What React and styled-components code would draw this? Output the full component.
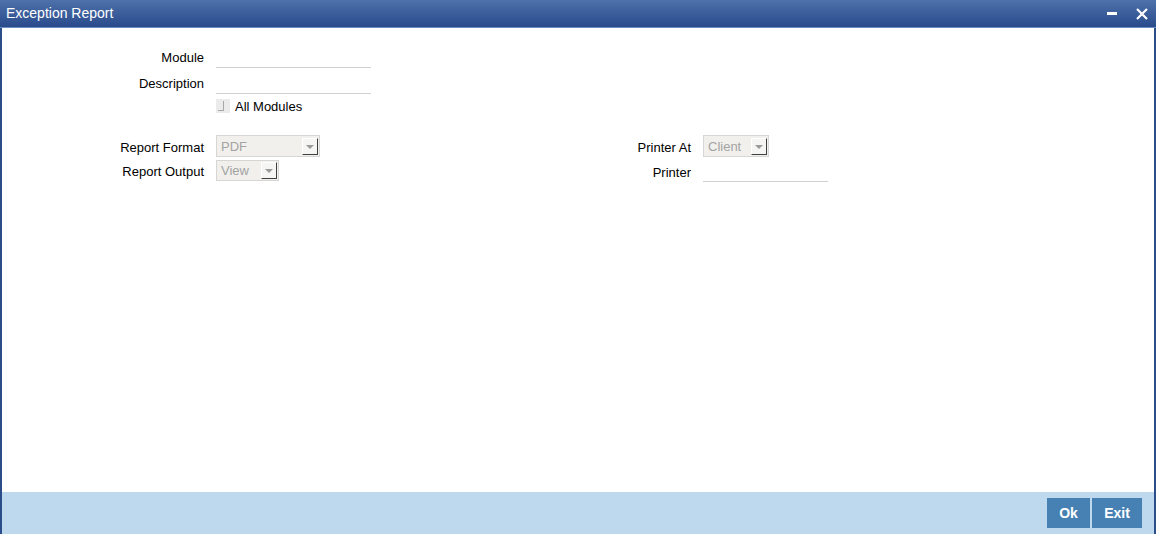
import React, { useState } from "react";
import styled, { createGlobalStyle } from "styled-components";

const GlobalStyle = createGlobalStyle`
  html, body {
    margin: 0;
    padding: 0;
    background: #fff;
    font-family: "Liberation Sans", Arial, sans-serif;
  }
`;

export const Window = styled.div`
  width: 1156px;
  height: 534px;
  box-sizing: border-box;
  border-left: 2px solid #2b4d8a;
  border-right: 2px solid #2b4d8a;
  display: flex;
  flex-direction: column;
  background: #fff;
`;

export const TitleBar = styled.div`
  height: 28px;
  margin: 0 -2px;
  padding: 0 7px 0 6px;
  box-sizing: border-box;
  display: flex;
  align-items: center;
  background: linear-gradient(#4d71aa, #2a4b8c);
  border-bottom: 1px solid #6a8cc0;
  color: #fff;
  font-size: 14px;
`;

export const Title = styled.div`
  flex: 1;
  margin-top: -2px;
`;

export const WinButton = styled.button`
  border: none;
  background: transparent;
  padding: 0;
  margin-left: ${(p) => p.gap || 0}px;
  width: 14px;
  height: 14px;
  display: flex;
  align-items: center;
  justify-content: center;
  cursor: pointer;
`;

export const Body = styled.div`
  flex: 1;
  padding-top: 17px;
  display: flex;
  flex-direction: column;
`;

export const Row = styled.div`
  display: flex;
  align-items: center;
  height: ${(p) => p.h || 22}px;
  margin-bottom: ${(p) => p.mb || 0}px;
`;

export const Label = styled.label`
  width: ${(p) => p.w || 202}px;
  margin-right: 12px;
  padding-top: 2px;
  text-align: right;
  font-size: 13px;
  color: #000;
  flex-shrink: 0;
`;

export const TextInput = styled.input`
  width: ${(p) => p.w || 155}px;
  height: 100%;
  box-sizing: border-box;
  border: none;
  border-bottom: 1px solid #d0d0d0;
  background: transparent;
  font-family: inherit;
  font-size: 13px;
  padding: 0 4px;
  &:focus {
    outline: none;
  }
`;

export const Check = styled.span`
  width: 14px;
  height: 14px;
  background: #ebebeb;
  position: relative;
  margin-right: 5px;
  &::after {
    content: "";
    position: absolute;
    left: 2px;
    top: 2px;
    width: 5px;
    height: 9px;
    border-right: 1px solid #a8a8a8;
    border-bottom: 1px solid #a8a8a8;
  }
`;

export const CheckText = styled.span`
  font-size: 13px;
  color: #000;
  padding-top: 1px;
`;

export const Cols = styled.div`
  display: flex;
  margin-top: 22px;
`;

export const Col = styled.div`
  width: ${(p) => p.w}px;
  display: flex;
  flex-direction: column;
  gap: 3px;
`;

export const Select = styled.div`
  width: ${(p) => p.w}px;
  height: ${(p) => p.h || 22}px;
  box-sizing: border-box;
  border: 1px solid #d6d6d2;
  background: #f1f0ec;
  display: flex;
  align-items: center;
  justify-content: space-between;
  padding: 0 1px 0 4px;
  font-size: 13px;
  color: #a3a3a3;
`;

export const Arrow = styled.span`
  width: 16px;
  height: 17px;
  box-sizing: border-box;
  background: #f5f5f3;
  border-top: 1px solid #fff;
  border-left: 1px solid #fff;
  border-right: 1px solid #404040;
  border-bottom: 1px solid #404040;
  display: flex;
  align-items: center;
  justify-content: center;
  &::after {
    content: "";
    border-left: 4px solid transparent;
    border-right: 4px solid transparent;
    border-top: 4px solid #9a9a9a;
    margin-top: 1px;
  }
`;

export const Footer = styled.div`
  height: 42px;
  background: #bed9ed;
  display: flex;
  justify-content: flex-end;
  align-items: flex-start;
  padding: 6px 12px 0 0;
  box-sizing: border-box;
  gap: 2px;
`;

export const Button = styled.button`
  height: 30px;
  width: ${(p) => p.w}px;
  border: none;
  background: #4781b3;
  color: #fff;
  font-family: "Liberation Sans", Arial, sans-serif;
  font-size: 14px;
  font-weight: bold;
  cursor: pointer;
`;

function SelectBox({ value, w, h }) {
  return (
    <Select w={w} h={h}>
      <span>{value}</span>
      <Arrow />
    </Select>
  );
}

export default function App() {
  const [module, setModule] = useState("");
  const [desc, setDesc] = useState("");
  const [printer, setPrinter] = useState("");

  return (
    <>
      <GlobalStyle />
      <Window>
        <TitleBar>
          <Title>Exception Report</Title>
          <WinButton aria-label="Minimize">
            <svg width="10" height="4" viewBox="0 0 10 4">
              <rect x="0" y="0" width="10" height="3" fill="#fff" />
            </svg>
          </WinButton>
          <WinButton gap={16} aria-label="Close">
            <svg width="12" height="12" viewBox="0 0 12 12">
              <path d="M1 1 L11 11 M11 1 L1 11" stroke="#fff" strokeWidth="2.2" />
            </svg>
          </WinButton>
        </TitleBar>
        <Body>
          <Row h={23} mb={3}>
            <Label>Module</Label>
            <TextInput value={module} onChange={(e) => setModule(e.target.value)} />
          </Row>
          <Row h={23} mb={5}>
            <Label>Description</Label>
            <TextInput value={desc} onChange={(e) => setDesc(e.target.value)} />
          </Row>
          <Row h={14}>
            <Label />
            <Check />
            <CheckText>All Modules</CheckText>
          </Row>
          <Cols>
            <Col w={487}>
              <Row h={22}>
                <Label>Report Format</Label>
                <SelectBox value="PDF" w={104} />
              </Row>
              <Row h={21}>
                <Label>Report Output</Label>
                <SelectBox value="View" w={63} h={21} />
              </Row>
            </Col>
            <Col w={500}>
              <Row h={22}>
                <Label w={202}>Printer At</Label>
                <SelectBox value="Client" w={66} />
              </Row>
              <Row h={22}>
                <Label w={202}>Printer</Label>
                <TextInput w={125} value={printer} onChange={(e) => setPrinter(e.target.value)} />
              </Row>
            </Col>
          </Cols>
        </Body>
        <Footer>
          <Button w={43}>Ok</Button>
          <Button w={50}>Exit</Button>
        </Footer>
      </Window>
    </>
  );
}
